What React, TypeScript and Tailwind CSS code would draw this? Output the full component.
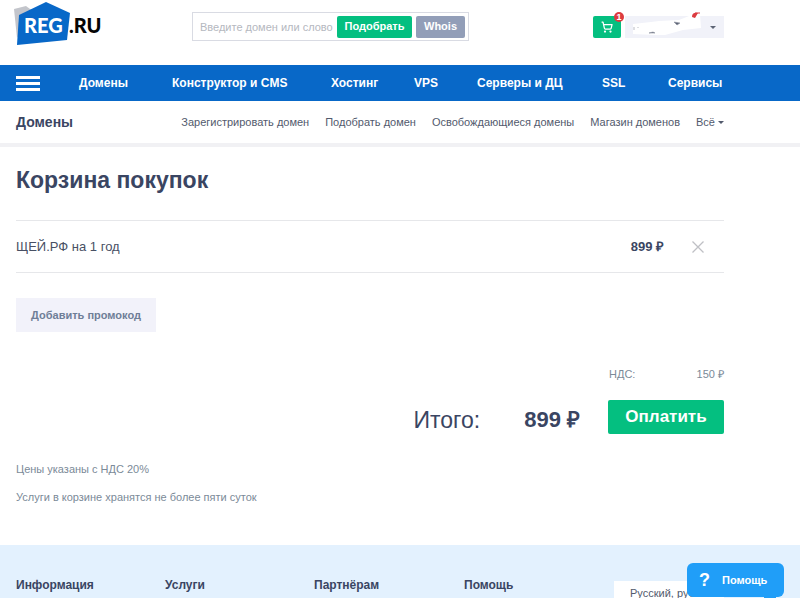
import { ShoppingCart } from "lucide-react";

const sections = ["Домены", "Конструктор и CMS", "Хостинг", "VPS", "Серверы и ДЦ", "SSL", "Сервисы"];
const domainLinks = ["Зарегистрировать домен", "Подобрать домен", "Освобождающиеся домены", "Магазин доменов"];
const footerColumns = ["Информация", "Услуги", "Партнёрам", "Помощь"];

function Logo() {
  return (
    <a href="#" aria-label="REG.RU" className="block w-[90px] shrink-0">
      <svg viewBox="0 0 90 46" className="block h-[46px] w-[90px] font-[Lato,Liberation_Sans] text-[20px] font-black">
        <path d="M2 9 L14 6 L22 12 L5 38 Z" fill="#c3c5cb" />
        <path d="M7 15 L34 2 L58 13 L55 40 L5 45 Z" fill="#0868c8" />
        <text x="12" y="33" fill="#fff">REG</text>
        <text x="57" y="33" fill="#050505">.RU</text>
      </svg>
    </a>
  );
}

function Caret({ className }: { className: string }) {
  return (
    <svg viewBox="0 0 6 3" className={`h-[3px] w-[6px] ${className}`} aria-hidden="true">
      <path d="M0 0h6L3 3z" fill="currentColor" />
    </svg>
  );
}

function Header() {
  return (
    <header className="flex h-[65px] w-full max-w-[740px] items-start pr-4 pl-3">
      <Logo />
      <form className="mt-3 ml-[90px] flex h-[29px] w-[277px] items-center gap-1 border border-[#d9dbe3] pr-[3px]">
        <input
          aria-label="Домен"
          placeholder="Введите домен или слово"
          className="h-full min-w-0 flex-1 pl-[7px] text-[11px] outline-none placeholder:text-[#b5b8c0]"
        />
        <button type="button" className="h-[22px] w-[75px] rounded-xs bg-[#04bf80] text-[11px] font-bold text-white">
          Подобрать
        </button>
        <button type="button" className="h-[22px] w-[49px] rounded-xs bg-[#929eb8] text-[11px] font-bold text-white">
          Whois
        </button>
      </form>
      <div className="mt-4 ml-auto flex gap-1">
        <button type="button" aria-label="Корзина" className="relative flex h-[22px] w-7 items-center justify-center rounded-xs bg-[#04bf80] text-white">
          <ShoppingCart size={12} strokeWidth={2.5} />
          <span className="absolute -top-1 -right-[3px] flex h-[10px] w-[10px] items-center justify-center rounded-full bg-[#dc3b40] text-[9px] leading-none font-bold">
            1
          </span>
        </button>
        <button type="button" aria-label="Профиль" className="relative h-[22px] w-[99px] bg-[#f1f2f9] text-[#5d6475]">
          <svg viewBox="0 0 99 28" className="absolute bottom-0 left-0 h-7 w-[99px]" aria-hidden="true">
            <path d="M8 14 L26 12 L34 11 L54 10 L64 6 L75 4 L76 18 L58 20 L40 25 L30 25 L8 24 Z" fill="#fff" />
            <path d="M67 7 Q67 2 73 3 L70 8Z" fill="#dc3b40" />
            <path d="M70 3h5" stroke="#dc3b40" strokeWidth="1" />
            <path d="M49 12l6 1-3 2zM24 23l4-1 2 1zM9 17v3M13 17v1" fill="#5d6475" stroke="#8d92a0" strokeWidth=".6" />
          </svg>
          <Caret className="absolute top-[10px] right-2" />
        </button>
      </div>
    </header>
  );
}

function MainNav() {
  return (
    <nav className="bg-[#0868c8]">
      <div className="flex h-9 w-full max-w-[740px] items-center px-4">
        <button type="button" aria-label="Меню" className="mr-[39px] flex w-6 shrink-0 flex-col gap-[3px]">
          <span className="h-[3px] bg-white" />
          <span className="h-[3px] bg-white" />
          <span className="h-[3px] bg-white" />
        </button>
        <div className="grid flex-1 grid-cols-[93fr_159fr_83fr_63fr_125fr_66fr_56fr] text-[12px] leading-4 font-bold whitespace-nowrap text-white">
          {sections.map((name) => (
            <a key={name} href="#">{name}</a>
          ))}
        </div>
      </div>
    </nav>
  );
}

function SubNav() {
  return (
    <nav className="border-b-4 border-[#f1f1f4]">
      <div className="flex h-[42px] w-full max-w-[740px] items-center justify-between px-4">
        <a href="#" className="text-[14px] font-bold text-[#3a4562]">Домены</a>
        <div className="flex items-center gap-4 text-[11px] whitespace-nowrap text-[#525a6d]">
          {domainLinks.map((name) => (
            <a key={name} href="#">{name}</a>
          ))}
          <button type="button" className="flex items-center gap-[3px]">
            Всё <Caret className="" />
          </button>
        </div>
      </div>
    </nav>
  );
}

function Cart() {
  return (
    <main className="w-full max-w-[740px] px-4 pt-[17px] pb-10 text-[#3a4562]">
      <h1 className="text-[23px] leading-8 font-bold">Корзина покупок</h1>
      <div className="mt-6 flex h-[53px] items-center border-y border-[#e6e7ea]">
        <span className="flex-1 text-[13px] text-[#485064]">ЩЕЙ.РФ на 1 год</span>
        <b className="text-[13px]">899 ₽</b>
        <button type="button" aria-label="Удалить" className="mr-5 ml-7 text-[#bfc0c5]">
          <svg viewBox="0 0 12 12" className="h-3 w-3">
            <path d="M.5.5l11 11M11.5.5l-11 11" stroke="currentColor" strokeWidth="1.3" fill="none" />
          </svg>
        </button>
      </div>
      <button type="button" className="mt-[25px] block h-[34px] w-[140px] bg-[#f2f2fa] text-[11px] font-bold text-[#6f7e97]">
        Добавить промокод
      </button>
      <div className="mt-[34px] ml-auto flex w-[115px] justify-between text-[11px] leading-4 text-[#7b8a98]">
        <span>НДС:</span>
        <span>150 ₽</span>
      </div>
      <div className="mt-[18px] flex items-start justify-end">
        <span className="mr-11 pt-1 text-[23px] leading-8">Итого:</span>
        <b className="mr-7 pt-1 text-[22px] leading-8">899 ₽</b>
        <button type="button" className="h-[34px] w-[116px] rounded-xs bg-[#04bf80] text-[17px] font-bold text-white">
          Оплатить
        </button>
      </div>
      <div className="mt-[25px] flex flex-col gap-3 text-[11px] leading-4 text-[#7b8a98]">
        <p>Цены указаны с НДС 20%</p>
        <p>Услуги в корзине хранятся не более пяти суток</p>
      </div>
    </main>
  );
}

function Footer() {
  return (
    <footer className="min-h-0 flex-1 overflow-hidden bg-[#e3f1fe]">
      <div className="grid w-full max-w-[740px] grid-cols-[149fr_149fr_150fr_150fr_110fr] px-4 pt-8 text-[12px] leading-4 font-bold text-[#3a4562]">
        {footerColumns.map((name) => (
          <h2 key={name}>{name}</h2>
        ))}
        <select aria-label="Язык" className="mt-1 h-6 w-full appearance-none bg-white pl-4 text-[11px] font-normal text-[#525a6d]">
          <option>Русский, рубли</option>
        </select>
      </div>
    </footer>
  );
}

export default function App() {
  return (
    <div className="relative flex h-screen flex-col overflow-hidden bg-white font-['Liberation_Sans',Arial,sans-serif]">
      <Header />
      <MainNav />
      <SubNav />
      <Cart />
      <Footer />
      <button type="button" className="absolute right-4 bottom-px flex h-[34px] w-[97px] items-center gap-3 rounded-md bg-[#209ef8] pl-3 font-[Liberation_Sans] text-[11px] font-bold text-white">
        <span className="text-[18px] leading-none">?</span>
        Помощь
        <span className="absolute right-2 -bottom-1 h-2 w-3 bg-[#209ef8]" />
      </button>
    </div>
  );
}
